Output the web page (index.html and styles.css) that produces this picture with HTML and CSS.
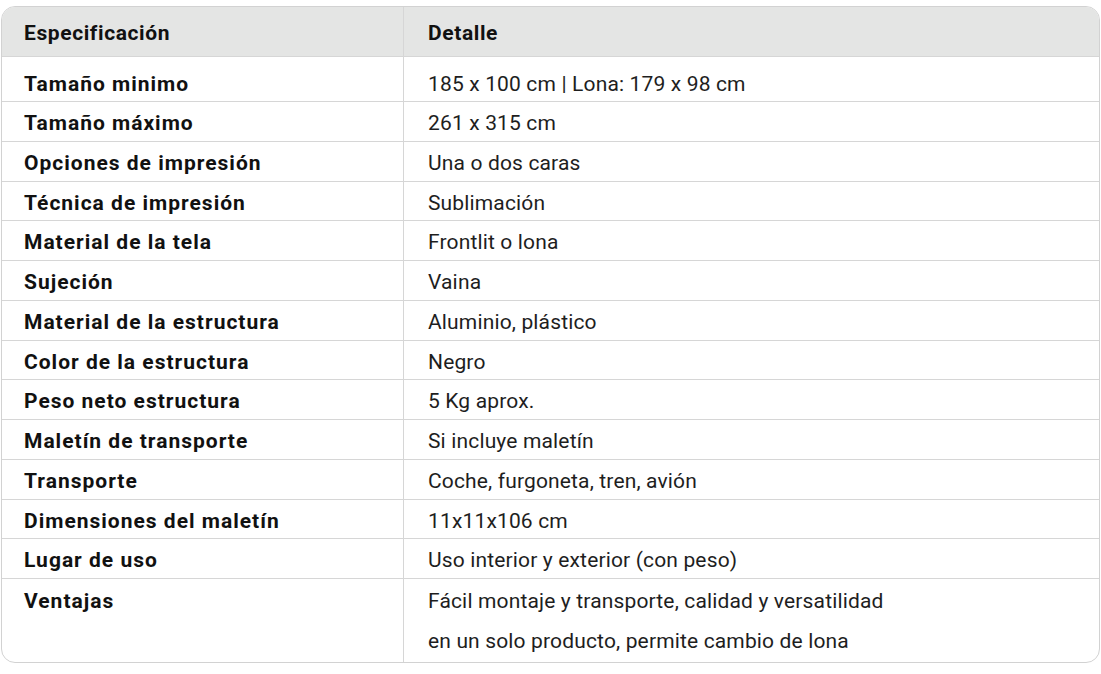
FILE: index.html
```html
<!DOCTYPE html>
<html lang="es">
<head>
<meta charset="utf-8">
<title>Especificaciones</title>
<link rel="stylesheet" href="styles.css">
</head>
<body>
<div class="page">
  <div class="spec-card">
    <table class="spec-table">
      <thead>
        <tr><th class="col-name">Especificación</th><th class="col-detail">Detalle</th></tr>
      </thead>
      <tbody>
        <tr class="first"><td class="col-name">Tamaño minimo</td><td class="col-detail">185 x 100 cm | Lona: 179 x 98 cm</td></tr>
        <tr><td class="col-name">Tamaño máximo</td><td class="col-detail">261 x 315 cm</td></tr>
        <tr><td class="col-name">Opciones de impresión</td><td class="col-detail">Una o dos caras</td></tr>
        <tr><td class="col-name">Técnica de impresión</td><td class="col-detail">Sublimación</td></tr>
        <tr><td class="col-name">Material de la tela</td><td class="col-detail">Frontlit o lona</td></tr>
        <tr><td class="col-name">Sujeción</td><td class="col-detail">Vaina</td></tr>
        <tr><td class="col-name">Material de la estructura</td><td class="col-detail">Aluminio, plástico</td></tr>
        <tr><td class="col-name">Color de la estructura</td><td class="col-detail">Negro</td></tr>
        <tr><td class="col-name">Peso neto estructura</td><td class="col-detail">5 Kg aprox.</td></tr>
        <tr><td class="col-name">Maletín de transporte</td><td class="col-detail">Si incluye maletín</td></tr>
        <tr><td class="col-name">Transporte</td><td class="col-detail">Coche, furgoneta, tren, avión</td></tr>
        <tr><td class="col-name">Dimensiones del maletín</td><td class="col-detail">11x11x106 cm</td></tr>
        <tr><td class="col-name">Lugar de uso</td><td class="col-detail">Uso interior y exterior (con peso)</td></tr>
        <tr class="last"><td class="col-name">Ventajas</td><td class="col-detail">Fácil montaje y transporte, calidad y versatilidad<br>en un solo producto, permite cambio de lona</td></tr>
      </tbody>
    </table>
  </div>
</div>
</body>
</html>
```

FILE: styles.css
```css
html, body {
  margin: 0;
  padding: 0;
  background: #ffffff;
}

.page {
  padding: 6px 1px 0 1px;
}

.spec-card {
  border: 1px solid #d2d2d2;
  border-radius: 14px;
  overflow: hidden;
  width: 1097px;
}

.spec-table {
  width: 100%;
  border-collapse: collapse;
  border-spacing: 0;
  table-layout: fixed;
  font-family: Roboto, "Liberation Sans", sans-serif;
  font-size: 21px;
  letter-spacing: 0.15px;
  color: #1e1e1e;
}

.spec-table th,
.spec-table td {
  text-align: left;
  vertical-align: top;
  padding: 5px 24px 0 24px;
  line-height: 33.75px;
  border-bottom: 1px solid #d6d6d6;
}

.spec-table .col-name {
  width: 379px;
  padding-left: 22px;
  padding-right: 0;
  font-weight: 700;
  letter-spacing: 1px;
  color: #111111;
  border-right: 1px solid #d6d6d6;
}

.spec-table thead th,
.spec-table thead th.col-name {
  background: #e4e5e4;
  font-weight: 700;
  letter-spacing: 0.6px;
  color: #111111;
  line-height: 46px;
  padding-top: 3px;
  padding-bottom: 0;
}

.spec-table tbody tr.first td {
  padding-top: 11px;
  line-height: 33px;
}

.spec-table tbody tr.last td {
  border-bottom: none;
  line-height: 40px;
  padding-top: 2px;
  padding-bottom: 1px;
}
```
